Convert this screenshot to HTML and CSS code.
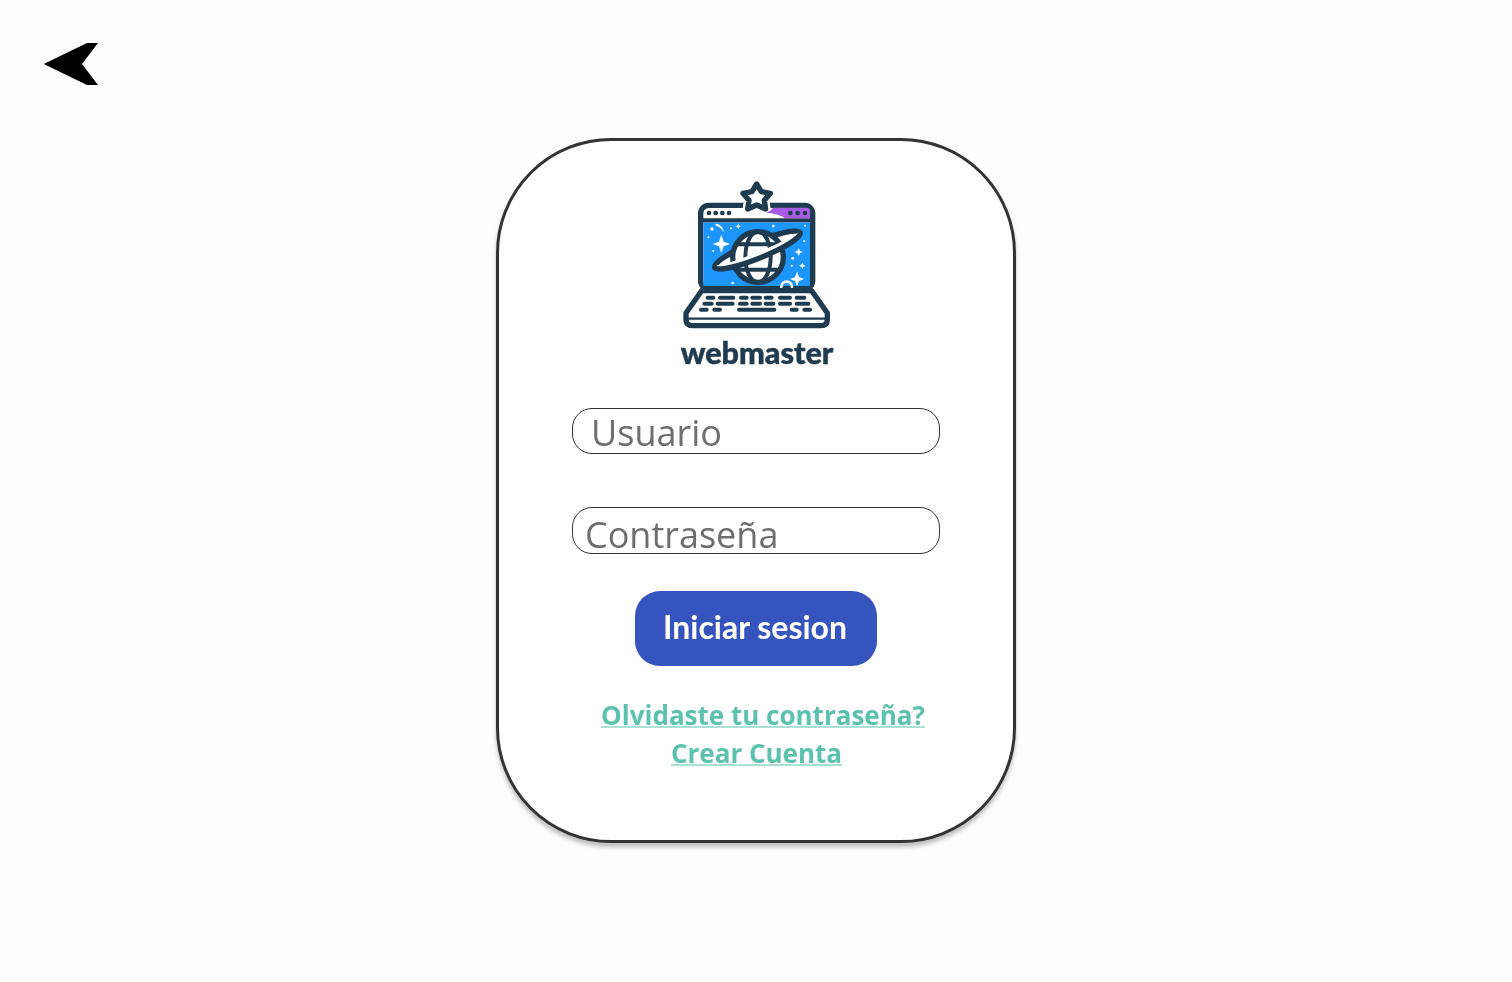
FILE: index.html
```html
<!DOCTYPE html>
<html lang="es">
<head>
<meta charset="utf-8">
<title>Iniciar sesion</title>
<link rel="stylesheet" href="styles.css">
</head>
<body>
<header class="top">
  <a class="back" href="#" aria-label="Volver">
    <svg class="back-icon" viewBox="0 0 55 42"><path d="M0.7 21 44 0H55L39 21 55 42H44Z"/></svg>
  </a>
</header>
<main class="card">
  <div class="brand">
    <svg class="logo" viewBox="0 0 516 465" fill="none" stroke-linecap="round" stroke-linejoin="round">
      <defs>
        <linearGradient id="band" x1="0" x2="1" y1="0" y2="0">
          <stop offset="0" stop-color="#dfe7ee"/>
          <stop offset="0.35" stop-color="#e8eef3"/>
          <stop offset="0.5" stop-color="#6e8fab"/>
          <stop offset="1" stop-color="#5d7f9b"/>
        </linearGradient>
      </defs>
      <rect x="92" y="91" width="336" height="250" rx="24" fill="#fff" stroke="#1f3b50" stroke-width="16"/>
      <rect x="100" y="142" width="320" height="191" fill="#1c96fb"/>
      <path d="M92 136H428" stroke="#1f3b50" stroke-width="12"/>
      <path d="M260 27 274 50 301 55 283 76 287 102 260 90 233 102 237 76 219 55 246 50Z" fill="#fff" stroke="#fff" stroke-width="30"/>
      <path d="M288 113C298 110 304 104 310 98H410Q420 98 420 110V130H345C335 121 310 114 288 113Z" fill="#a75be6"/>
      <g fill="#1f3b50"><circle cx="117" cy="114" r="7"/><circle cx="137" cy="114" r="7"/><circle cx="157" cy="114" r="7"/><circle cx="177" cy="114" r="7"/><circle cx="361" cy="114" r="7"/><circle cx="383" cy="114" r="7"/><circle cx="405" cy="114" r="7"/></g>
      <path d="M260 27 274 50 301 55 283 76 287 102 260 90 233 102 237 76 219 55 246 50Z" fill="#fff" stroke="#1f3b50" stroke-width="16"/>
      <g fill="#fff">
        <path d="M154 180 161 200 180 207 161 214 154 234 147 214 128 207 147 200Z"/>
        <path d="M381 290 387 306 402 312 387 318 381 334 375 318 360 312 375 306Z"/>
        <path d="M205 145 208 152 215 153 208 156 205 162 202 156 195 153 202 152Z"/>
        <path d="M386 220 390 228 399 231 390 234 386 243 382 234 373 231 382 228Z"/>
        <path d="M397 263 400 269 407 272 400 275 397 282 394 275 387 272 394 269Z"/>
        <circle cx="126" cy="162" r="5"/><circle cx="183" cy="160" r="3"/><circle cx="310" cy="153" r="4"/><circle cx="115" cy="187" r="3"/><circle cx="403" cy="198" r="3"/><circle cx="368" cy="250" r="4"/><circle cx="130" cy="228" r="3"/><circle cx="188" cy="324" r="4"/><circle cx="365" cy="272" r="3"/><circle cx="405" cy="152" r="3"/>
        <path d="M137 146C150 147 160 156 161 172 155 160 147 154 137 152Z"/>
      </g>
      <path d="M334 336A16 16 0 0 1 366 336" stroke="#fff" stroke-width="8"/>
      <ellipse cx="262" cy="225" rx="138" ry="25" transform="rotate(-22 262 225)" fill="#fff" stroke="#1f3b50" stroke-width="16"/>
      <circle cx="264" cy="246" r="76" fill="#fff" stroke="#1f3b50" stroke-width="16"/>
      <g stroke="#1f3b50" stroke-width="12">
        <ellipse cx="264" cy="246" rx="38" ry="76"/>
        <path d="M198 208H330M196 284H332"/>
      </g>
      <g transform="rotate(-22 262 225)">
        <path d="M-138 0A138 13 0 0 0 138 0" transform="translate(262 225)" stroke="#fff" stroke-width="13"/>
        <path d="M-138 0A138 25 0 0 0 138 0" transform="translate(262 225)" stroke="#1f3b50" stroke-width="16"/>
      </g>
      <path d="M95 347H425L472 414V434Q472 452 450 452H70Q48 452 48 434V414Z" fill="#fff" stroke="#1f3b50" stroke-width="16"/>
      <path d="M56 441H464" stroke="url(#band)" stroke-width="9" stroke-linecap="butt"/>
      <path d="M50 431H470" stroke="#1f3b50" stroke-width="7"/>
      <g stroke="#1f3b50" stroke-width="12">
        <path d="M113 368H130M150 368H190M213 368H230M247 368H270M287 368H305M330 368H360M380 368H403"/>
        <path d="M103 386H125M143 386H188M210 386H230M247 386H270M287 386H310M330 386H360M380 386H415"/>
        <path d="M93 404H110M133 404H150M207 404H313M365 404H380M403 404H420"/>
      </g>
    </svg>
    <div class="wordmark">webmaster</div>
  </div>
  <form class="login">
    <input class="field field-user" type="text" placeholder="Usuario">
    <input class="field field-pass" type="password" placeholder="Contraseña">
    <button class="submit" type="button">Iniciar sesion</button>
  </form>
  <nav class="links">
    <a class="link link-forgot" href="#">Olvidaste tu contraseña?</a>
    <a class="link link-create" href="#">Crear Cuenta</a>
  </nav>
</main>
</body>
</html>
```
FILE: styles.css
```css
* { box-sizing: border-box; }
html, body { margin: 0; height: 100%; }
body {
  background: #fdfdfd;
  display: flex;
  flex-direction: column;
  align-items: center;
  font-family: "Open Sans", sans-serif;
  overflow: hidden;
}
.top {
  align-self: stretch;
  padding: 43px 0 0 43px;
  height: 138px;
}
.back { display: block; width: 55px; height: 42px; }
.back-icon { display: block; width: 55px; height: 42px; fill: #000; }
.card {
  width: 520px;
  height: 705px;
  border: 3px solid #333;
  border-radius: 115px;
  background: #fefefe;
  box-shadow: 0 4px 4px rgba(0, 0, 0, 0.25);
  padding-top: 34px;
  display: flex;
  flex-direction: column;
  align-items: center;
  will-change: transform;
}
.brand { display: flex; flex-direction: column; align-items: center; }
.logo { display: block; width: 172px; height: 155px; }
.wordmark {
  font-family: Lato, sans-serif;
  font-weight: 900;
  font-size: 30.6px;
  line-height: 36px;
  color: #1f3b50;
  -webkit-text-stroke: 0.5px #1f3b50;
  margin-top: 5px;
  margin-left: 2px;
}
.login {
  margin-top: 37px;
  display: flex;
  flex-direction: column;
  align-items: center;
}
.field {
  display: block;
  width: 368px;
  height: 46px;
  border: 1px solid #333;
  border-radius: 20px;
  background: #fefefe;
  font-family: "Open Sans", sans-serif;
  font-size: 36px;
  outline: none;
}
.field::placeholder { color: #6e6e6e; opacity: 1; }
.field-user { padding: 2px 18px 0; }
.field-pass { margin-top: 53px; height: 47px; padding: 8px 12px 0; }
.submit {
  margin-top: 37px;
  width: 242px;
  height: 75px;
  border: 0;
  border-radius: 25px;
  background: #3654bd;
  color: #fff;
  font-family: Lato, sans-serif;
  font-weight: 700;
  font-size: 32px;
  padding: 0 2px 4px 0;
}
.links {
  margin-top: 30px;
  display: flex;
  flex-direction: column;
  align-items: center;
}
.link {
  font-weight: 700;
  font-size: 26px;
  line-height: 38px;
  color: #5cc2ab;
  text-decoration: underline;
  text-decoration-color: rgba(92, 194, 171, 0.5);
  text-decoration-thickness: 2px;
}
.link-forgot { margin-left: 14px; }
.link-create { margin-left: 1px; }
```
